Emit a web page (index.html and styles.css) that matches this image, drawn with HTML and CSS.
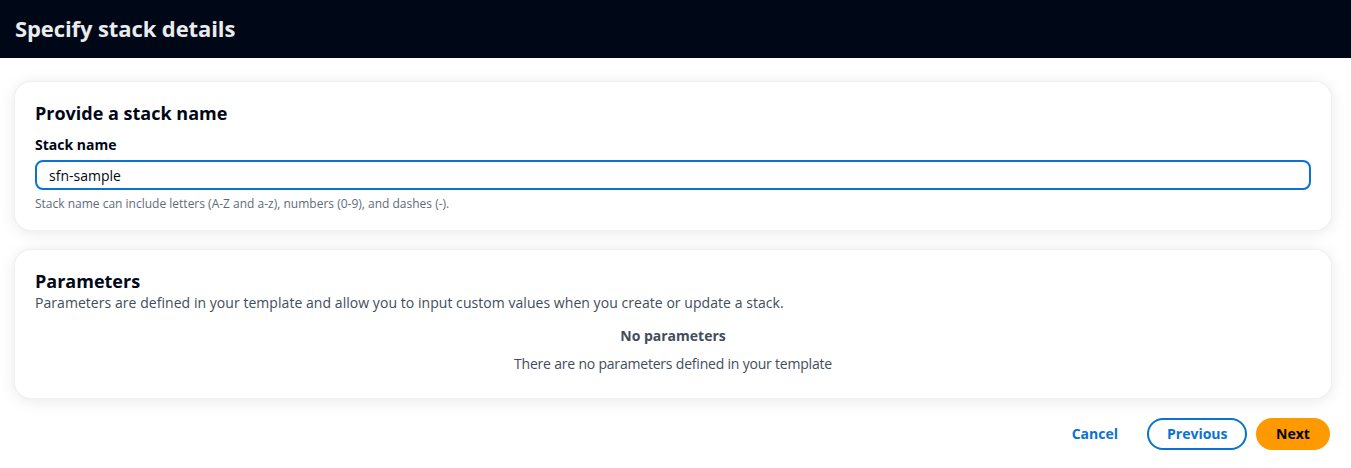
FILE: index.html
```html
<!DOCTYPE html>
<html lang="en">
<head>
<meta charset="utf-8">
<title>Specify stack details</title>
<link rel="stylesheet" href="styles.css">
</head>
<body>
<header class="page-header">
  <h1 class="page-title">Specify stack details</h1>
</header>
<main class="content">
  <section class="card">
    <h2 class="card-title">Provide a stack name</h2>
    <div class="field">
      <label class="field-label" for="stack-name">Stack name</label>
      <input class="text-input" id="stack-name" type="text" value="sfn-sample">
      <p class="field-help">Stack name can include letters (A-Z and a-z), numbers (0-9), and dashes (-).</p>
    </div>
  </section>
  <section class="card">
    <h2 class="card-title">Parameters</h2>
    <p class="card-desc">Parameters are defined in your template and allow you to input custom values when you create or update a stack.</p>
    <div class="empty">
      <p class="empty-title">No parameters</p>
      <p class="empty-text">There are no parameters defined in your template</p>
    </div>
  </section>
  <div class="actions">
    <button class="btn btn-link" type="button">Cancel</button>
    <button class="btn btn-normal" type="button">Previous</button>
    <button class="btn btn-primary" type="button">Next</button>
  </div>
</main>
</body>
</html>
```
FILE: styles.css
```css
* { box-sizing: border-box; }
html, body { margin: 0; padding: 0; background: #ffffff; }
body {
  font-family: "Open Sans", "Noto Sans", "Liberation Sans", sans-serif;
  color: #000716;
  font-size: 14px;
  line-height: 20px;
}
.page-header {
  background: #000716;
  height: 58px;
  display: flex;
  align-items: center;
  padding: 0 15px 2px;
}
.page-title {
  margin: 0;
  font-size: 22px;
  line-height: 28px;
  font-weight: 700;
  color: #e9ebed;
  letter-spacing: -0.1px;
}
.content {
  padding: 24px 20px 0 15px;
  display: flex;
  flex-direction: column;
  gap: 20px;
}
.card {
  background: #ffffff;
  border-radius: 16px;
  box-shadow: 0 0 1px 1px #eef0f2, 0 2px 16px rgba(0, 7, 22, 0.10);
  padding: 20px 20px 18px 20px;
}
.card-title {
  margin: 0;
  font-size: 18px;
  line-height: 22px;
  font-weight: 700;
  color: #000716;
}
.field { margin-top: 11px; }
.field-label {
  display: block;
  font-size: 14px;
  line-height: 20px;
  font-weight: 700;
  color: #000716;
}
.text-input {
  display: block;
  width: 100%;
  height: 30px;
  margin-top: 5px;
  border: 2px solid #0972d3;
  border-radius: 8px;
  padding: 0 12px;
  font: inherit;
  font-size: 14px;
  color: #000716;
  outline: none;
}
.field-help {
  margin: 6px 0 0;
  font-size: 12px;
  line-height: 16px;
  color: #5f6b7a;
}
.card-desc {
  margin: 1px 0 0;
  color: #414d5c;
  letter-spacing: 0.05px;
}
.empty {
  margin-top: 13px;
  margin-bottom: 6px;
  text-align: center;
  color: #414d5c;
}
.empty-title { margin: 0; font-weight: 700; }
.empty-text { margin: 8px 0 0; letter-spacing: -0.2px; }
.actions {
  display: flex;
  justify-content: flex-end;
  align-items: center;
  gap: 9px;
  padding-right: 1px;
}
.btn {
  font: inherit;
  font-weight: 700;
  font-size: 14px;
  height: 32px;
  border-radius: 20px;
  padding: 0 18px;
  cursor: pointer;
}
.btn-link {
  background: none;
  border: 2px solid transparent;
  color: #0972d3;
}
.btn-normal {
  background: #ffffff;
  border: 2px solid #0972d3;
  color: #0972d3;
  width: 100px;
}
.btn-primary {
  background: #ff9900;
  border: 2px solid #ff9900;
  color: #000716;
  width: 74px;
}
```
